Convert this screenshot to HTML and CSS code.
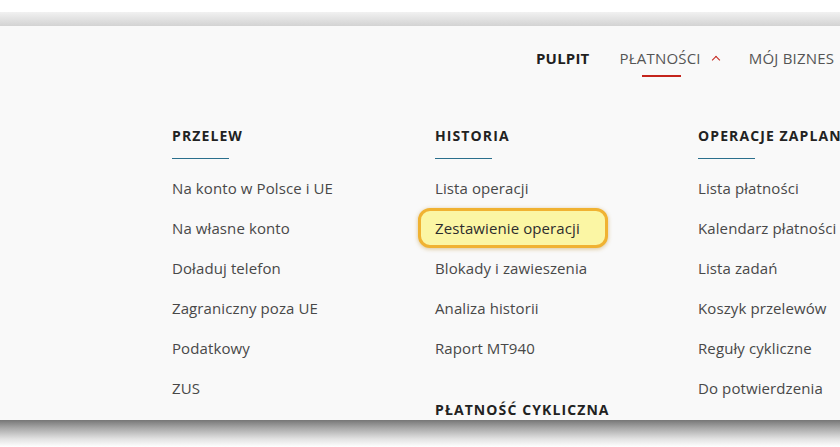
FILE: index.html
```html
<!DOCTYPE html>
<html lang="pl">
<head>
<meta charset="utf-8">
<title>Płatności</title>
<link rel="stylesheet" href="styles.css">
</head>
<body>
<div class="frame">
  <div class="panel">
    <nav class="topnav">
      <a class="nav-item strong">PULPIT</a>
      <a class="nav-item active"><span class="nav-label">PŁATNOŚCI</span><span class="caret"></span></a>
      <a class="nav-item">MÓJ BIZNES</a>
    </nav>
    <div class="columns">
      <section class="col">
        <h3 class="col-title">PRZELEW</h3>
        <ul class="links">
          <li>Na konto w Polsce i UE</li>
          <li>Na własne konto</li>
          <li>Doładuj telefon</li>
          <li>Zagraniczny poza UE</li>
          <li>Podatkowy</li>
          <li>ZUS</li>
        </ul>
      </section>
      <section class="col">
        <h3 class="col-title">HISTORIA</h3>
        <ul class="links">
          <li>Lista operacji</li>
          <li><span class="highlight">Zestawienie operacji</span></li>
          <li>Blokady i zawieszenia</li>
          <li>Analiza historii</li>
          <li>Raport MT940</li>
        </ul>
        <h3 class="col-title sub">PŁATNOŚĆ CYKLICZNA</h3>
      </section>
      <section class="col">
        <h3 class="col-title">OPERACJE ZAPLANOWANE</h3>
        <ul class="links">
          <li>Lista płatności</li>
          <li>Kalendarz płatności</li>
          <li>Lista zadań</li>
          <li>Koszyk przelewów</li>
          <li>Reguły cykliczne</li>
          <li>Do potwierdzenia</li>
        </ul>
      </section>
    </div>
  </div>
</div>
</body>
</html>
```
FILE: styles.css
```css
html, body {
  margin: 0;
  padding: 0;
  background: #ffffff;
  overflow: hidden;
}
body {
  font-family: "Open Sans", "Liberation Sans", sans-serif;
  width: 840px;
  height: 447px;
}
.frame {
  margin-top: 12px;
  padding: 14px 0 27px;
  background:
    linear-gradient(#f1f1f1, #d3d3d3) top / 100% 14px no-repeat,
    linear-gradient(#767676, #a8a8a8 30%, #e2e2e2 70%, #ffffff) bottom / 100% 27px no-repeat;
}
.panel {
  height: 394px;
  background: #f9f9f9;
  overflow: hidden;
  white-space: nowrap;
}
.topnav {
  display: flex;
  align-items: center;
  padding: 17px 0 0 536px;
  height: 30px;
}
.nav-item {
  position: relative;
  font-size: 15px;
  color: #555555;
  letter-spacing: 0.2px;
  text-decoration: none;
  display: flex;
  align-items: center;
  margin-right: 30px;
}
.nav-item.strong {
  font-weight: 700;
  color: #1f1f1f;
}
.nav-item.active .nav-label {
  position: relative;
}
.nav-item.active .nav-label::after {
  content: "";
  position: absolute;
  left: 22px;
  width: 39px;
  top: 27px;
  height: 2px;
  background: #c4241c;
}
.caret {
  width: 5px;
  height: 5px;
  border-top: 1.5px solid #c4241c;
  border-left: 1.5px solid #c4241c;
  transform: rotate(45deg);
  margin: 4px 0 0 12px;
}
.columns {
  display: grid;
  grid-template-columns: 263px 263px 263px;
  padding: 53px 0 0 172px;
}
.col-title {
  margin: 0;
  font-size: 14px;
  font-weight: 700;
  letter-spacing: 1.1px;
  color: #222222;
  line-height: 20px;
  padding-bottom: 13px;
  position: relative;
}
.col-title::after {
  content: "";
  position: absolute;
  left: 0;
  bottom: 0;
  width: 57px;
  height: 1px;
  background: #2a6f8c;
}
.col-title.sub {
  margin-top: 32px;
}
.col-title.sub::after {
  display: none;
}
.links {
  list-style: none;
  margin: 9px 0 0;
  padding: 0;
}
.links li {
  font-size: 15px;
  color: #484848;
  line-height: 20px;
  padding: 10px 0;
  letter-spacing: 0.1px;
}
.highlight {
  display: inline-block;
  margin: -10px 0 -10px -17px;
  padding: 7px 25px 7px 14px;
  border: 3px solid #f0b232;
  border-radius: 12px;
  background: #fbf6a4;
  color: #2d2d2d;
  box-shadow: 0 1px 4px rgba(180, 130, 20, 0.45);
}
```
